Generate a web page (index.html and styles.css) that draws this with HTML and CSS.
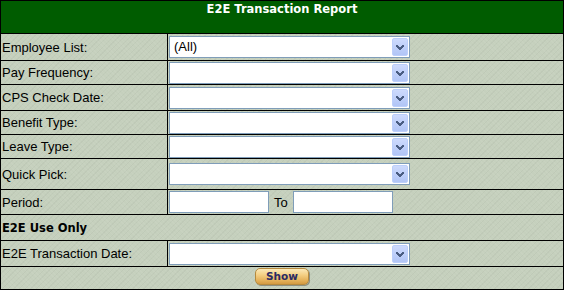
FILE: index.html
```html
<!DOCTYPE html>
<html>
<head>
<meta charset="utf-8">
<title>E2E Transaction Report</title>
<link rel="stylesheet" href="styles.css">
</head>
<body>
<div class="report">
  <div class="title">E2E Transaction Report</div>

  <div class="row h26">
    <div class="label">Employee List:</div>
    <div class="field">
      <div class="select"><span class="value">(All)</span><span class="drop"><svg width="8" height="5" viewBox="0 0 8 5" shape-rendering="crispEdges"><rect x="0" y="0" width="2" height="1"/><rect x="6" y="0" width="2" height="1"/><rect x="0" y="1" width="3" height="1"/><rect x="5" y="1" width="3" height="1"/><rect x="1" y="2" width="6" height="1"/><rect x="2" y="3" width="4" height="1"/><rect x="3" y="4" width="2" height="1"/></svg></span></div>
    </div>
  </div>

  <div class="row h23">
    <div class="label">Pay Frequency:</div>
    <div class="field">
      <div class="select"><span class="value"></span><span class="drop"><svg width="8" height="5" viewBox="0 0 8 5" shape-rendering="crispEdges"><rect x="0" y="0" width="2" height="1"/><rect x="6" y="0" width="2" height="1"/><rect x="0" y="1" width="3" height="1"/><rect x="5" y="1" width="3" height="1"/><rect x="1" y="2" width="6" height="1"/><rect x="2" y="3" width="4" height="1"/><rect x="3" y="4" width="2" height="1"/></svg></span></div>
    </div>
  </div>

  <div class="row h25">
    <div class="label">CPS Check Date:</div>
    <div class="field">
      <div class="select"><span class="value"></span><span class="drop"><svg width="8" height="5" viewBox="0 0 8 5" shape-rendering="crispEdges"><rect x="0" y="0" width="2" height="1"/><rect x="6" y="0" width="2" height="1"/><rect x="0" y="1" width="3" height="1"/><rect x="5" y="1" width="3" height="1"/><rect x="1" y="2" width="6" height="1"/><rect x="2" y="3" width="4" height="1"/><rect x="3" y="4" width="2" height="1"/></svg></span></div>
    </div>
  </div>

  <div class="row h23">
    <div class="label">Benefit Type:</div>
    <div class="field">
      <div class="select"><span class="value"></span><span class="drop"><svg width="8" height="5" viewBox="0 0 8 5" shape-rendering="crispEdges"><rect x="0" y="0" width="2" height="1"/><rect x="6" y="0" width="2" height="1"/><rect x="0" y="1" width="3" height="1"/><rect x="5" y="1" width="3" height="1"/><rect x="1" y="2" width="6" height="1"/><rect x="2" y="3" width="4" height="1"/><rect x="3" y="4" width="2" height="1"/></svg></span></div>
    </div>
  </div>

  <div class="row h23">
    <div class="label">Leave Type:</div>
    <div class="field">
      <div class="select"><span class="value"></span><span class="drop"><svg width="8" height="5" viewBox="0 0 8 5" shape-rendering="crispEdges"><rect x="0" y="0" width="2" height="1"/><rect x="6" y="0" width="2" height="1"/><rect x="0" y="1" width="3" height="1"/><rect x="5" y="1" width="3" height="1"/><rect x="1" y="2" width="6" height="1"/><rect x="2" y="3" width="4" height="1"/><rect x="3" y="4" width="2" height="1"/></svg></span></div>
    </div>
  </div>

  <div class="row h30">
    <div class="label">Quick Pick:</div>
    <div class="field">
      <div class="select"><span class="value"></span><span class="drop"><svg width="8" height="5" viewBox="0 0 8 5" shape-rendering="crispEdges"><rect x="0" y="0" width="2" height="1"/><rect x="6" y="0" width="2" height="1"/><rect x="0" y="1" width="3" height="1"/><rect x="5" y="1" width="3" height="1"/><rect x="1" y="2" width="6" height="1"/><rect x="2" y="3" width="4" height="1"/><rect x="3" y="4" width="2" height="1"/></svg></span></div>
    </div>
  </div>

  <div class="row h24">
    <div class="label">Period:</div>
    <div class="field">
      <div class="textbox"></div>
      <span class="to">To</span>
      <div class="textbox"></div>
    </div>
  </div>

  <div class="row h25 section">E2E Use Only</div>

  <div class="row h25">
    <div class="label">E2E Transaction Date:</div>
    <div class="field">
      <div class="select"><span class="value"></span><span class="drop"><svg width="8" height="5" viewBox="0 0 8 5" shape-rendering="crispEdges"><rect x="0" y="0" width="2" height="1"/><rect x="6" y="0" width="2" height="1"/><rect x="0" y="1" width="3" height="1"/><rect x="5" y="1" width="3" height="1"/><rect x="1" y="2" width="6" height="1"/><rect x="2" y="3" width="4" height="1"/><rect x="3" y="4" width="2" height="1"/></svg></span></div>
    </div>
  </div>

  <div class="row h22 actions last">
    <button class="show" type="button">Show</button>
  </div>
</div>
</body>
</html>
```

FILE: styles.css
```css
html, body {
  margin: 0;
  padding: 0;
  background: #c5d0bd;
}

.report {
  width: 564px;
  height: 290px;
  box-sizing: border-box;
  border: 1px solid #000;
  background-color: #c5d0bd;
  background-image:
    repeating-linear-gradient(45deg, rgba(255,255,255,0.05) 0 1px, transparent 1px 3px),
    repeating-linear-gradient(-45deg, rgba(0,0,0,0.03) 0 1px, transparent 1px 4px);
  font-family: "Liberation Sans", Arial, sans-serif;
  font-size: 13px;
  color: #000;
}

.title {
  height: 31px;
  padding-top: 1px;
  background: #005c00;
  border-bottom: 1px solid #000;
  color: #fff;
  text-align: center;
  font-family: "DejaVu Sans", Verdana, sans-serif;
  font-weight: bold;
  font-size: 11.5px;
  line-height: 14px;
}

.row {
  display: flex;
  border-bottom: 1px solid #000;
}
.row.last { border-bottom: none; }

.h22 { height: 22px; }
.h23 { height: 23px; }
.h24 { height: 24px; }
.h25 { height: 25px; }
.h26 { height: 26px; }
.h30 { height: 30px; }

.label {
  width: 165px;
  padding-left: 1px;
  border-right: 1px solid #000;
  display: flex;
  align-items: center;
  white-space: nowrap;
}

.field {
  flex: 1;
  display: flex;
  align-items: center;
  padding-left: 1px;
}

.select {
  width: 241px;
  height: 22px;
  box-sizing: border-box;
  border: 1px solid #7f9db9;
  background: #fff;
  display: flex;
  align-items: center;
  padding: 1px;
}
.select .value {
  flex: 1;
  padding-left: 3px;
  line-height: 16px;
}
.drop {
  width: 16px;
  height: 18px;
  box-sizing: border-box;
  border: 1px solid #bccffb;
  border-radius: 2px;
  background: linear-gradient(#cddafd, #b1c5f6);
  display: flex;
  align-items: center;
  justify-content: center;
}
.drop svg {
  display: block;
  fill: #4a5d82;
  margin-top: 1px;
}

.textbox {
  width: 100px;
  height: 22px;
  box-sizing: border-box;
  border: 1px solid #7f9db9;
  background: #fff;
}
.to {
  margin: 0 5px 0 5px;
}

.section {
  align-items: center;
  padding-left: 1px;
  font-family: "DejaVu Sans", Verdana, sans-serif;
  font-weight: bold;
  font-size: 11.5px;
}

.actions {
  justify-content: center;
  align-items: flex-start;
}

.show {
  margin: 1px 0 0 0;
  padding: 0;
  width: 54px;
  height: 17px;
  border: 1px solid #b68a3e;
  border-radius: 5px;
  background: linear-gradient(#fbe9b8 0%, #f4cf83 40%, #e5b25a 75%, #d49a42 100%);
  box-shadow: 1px 1px 0 #8d8f80;
  color: #2b2a63;
  font-family: "DejaVu Sans", Verdana, sans-serif;
  font-weight: bold;
  font-size: 10.5px;
  line-height: 15px;
  cursor: pointer;
}
```
